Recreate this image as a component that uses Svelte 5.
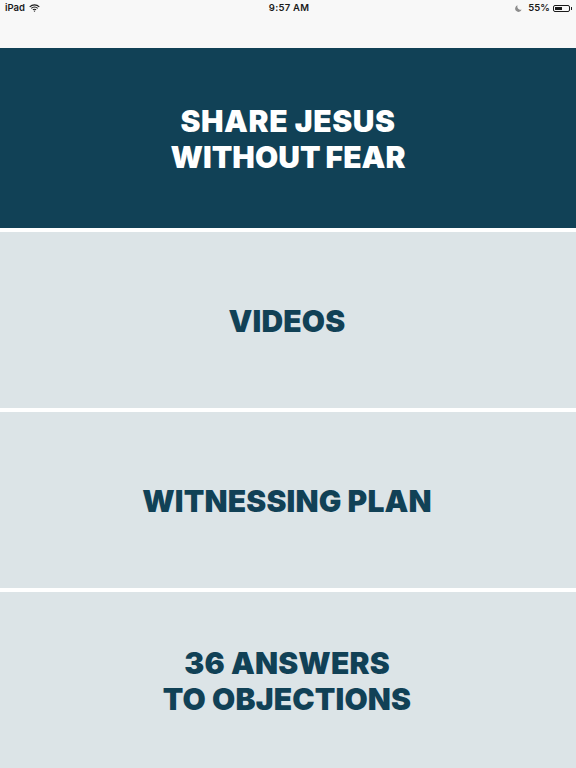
<script>
  const tiles = [
    { lines: ["SHARE JESUS", "WITHOUT FEAR"], main: true },
    { lines: ["VIDEOS"] },
    { lines: ["WITNESSING PLAN"] },
    { lines: ["36 ANSWERS", "TO OBJECTIONS"] },
  ];
</script>

<div class="screen">
  <header class="status">
    <div class="side">
      <span>iPad</span>
      <svg class="wifi" viewBox="0 0 12 9" width="11" height="8">
        <path d="M0.6 3.2a7.6 7.6 0 0 1 10.8 0" />
        <path d="M2.4 5a5 5 0 0 1 7.2 0" />
        <path d="M4.2 6.7a2.5 2.5 0 0 1 3.6 0" />
        <circle cx="6" cy="8" r="0.8" />
      </svg>
    </div>
    <span class="time">9:57 AM</span>
    <div class="side right">
      <svg class="moon" viewBox="0 0 8 8" width="7" height="7">
        <path d="M3 0.4a3.8 3.8 0 1 0 4.6 4.8a3.6 3.6 0 0 1-4.6-4.8z" />
      </svg>
      <span class="pct">55%</span>
      <div class="battery"><div class="level" style="width: 55%"></div></div>
    </div>
  </header>

  {#each tiles as tile}
    <button class="tile" class:main={tile.main}>
      {#each tile.lines as line}
        <span>{line}</span>
      {/each}
    </button>
  {/each}
</div>

<style>
  :global(body) {
    margin: 0;
    background: #fff;
  }
  .screen {
    width: 576px;
    height: 768px;
    overflow: hidden;
    display: flex;
    flex-direction: column;
    font-family: Inter, "Liberation Sans", sans-serif;
  }
  .status {
    height: 48px;
    flex: none;
    box-sizing: border-box;
    padding: 2px 4px 0 5px;
    background: #f8f8f8;
    display: grid;
    grid-template-columns: 1fr auto 1fr;
    align-items: start;
    font-size: 9.5px;
    line-height: 12px;
    font-weight: 600;
    color: #1a1a1a;
  }
  .side {
    display: flex;
    align-items: center;
    gap: 4px;
  }
  .side.right {
    justify-content: flex-end;
    gap: 6px;
  }
  .time {
    letter-spacing: 0.25px;
    margin-left: 1px;
  }
  .pct {
    letter-spacing: 0.1px;
  }
  .wifi {
    fill: #1a1a1a;
  }
  .wifi path {
    fill: none;
    stroke: #1a1a1a;
    stroke-width: 1.2;
  }
  .moon {
    fill: #8d8d8d;
  }
  .battery {
    position: relative;
    width: 17px;
    height: 7px;
    box-sizing: border-box;
    border: 1px solid #1a1a1a;
    border-radius: 2px;
    padding: 1px;
    margin-left: -3px;
    margin-right: 2px;
  }
  .battery::after {
    content: "";
    position: absolute;
    right: -3px;
    top: 1px;
    width: 1.5px;
    height: 3px;
    background: #1a1a1a;
  }
  .level {
    height: 100%;
    background: #1a1a1a;
  }
  .tile {
    flex: none;
    height: 176px;
    margin: 0 0 4px;
    padding: 1px 2px 0 0;
    border: 0;
    width: 100%;
    background: #dce4e7;
    color: #114156;
    font-family: inherit;
    font-size: 30px;
    font-weight: 900;
    line-height: 36px;
    letter-spacing: 0.15px;
    display: flex;
    flex-direction: column;
    align-items: center;
    justify-content: center;
  }
  .tile.main {
    height: 180px;
    padding: 2px 0 0;
    background: #114156;
    color: #fff;
    letter-spacing: 0.05px;
    word-spacing: -1px;
  }
  .tile.main span:first-child {
    letter-spacing: 0.6px;
    word-spacing: 0;
  }
</style>
